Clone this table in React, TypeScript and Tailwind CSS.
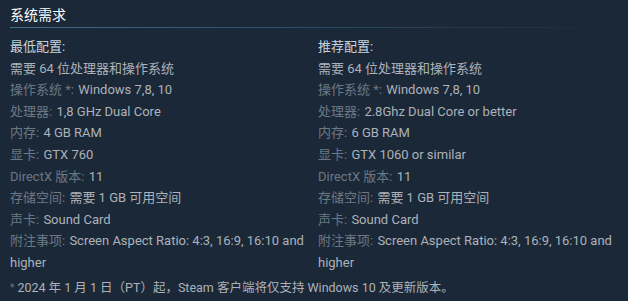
import React from "react";

type Row = { label: string; value: string };

const minRows: Row[] = [
  { label: "操作系统 *:", value: "Windows 7,8, 10" },
  { label: "处理器:", value: "1,8 GHz Dual Core" },
  { label: "内存:", value: "4 GB RAM" },
  { label: "显卡:", value: "GTX 760" },
  { label: "DirectX 版本:", value: "11" },
  { label: "存储空间:", value: "需要 1 GB 可用空间" },
  { label: "声卡:", value: "Sound Card" },
  { label: "附注事项:", value: "Screen Aspect Ratio: 4:3, 16:9, 16:10 and higher" },
];

const recRows: Row[] = [
  { label: "操作系统 *:", value: "Windows 7,8, 10" },
  { label: "处理器:", value: "2.8Ghz Dual Core or better" },
  { label: "内存:", value: "6 GB RAM" },
  { label: "显卡:", value: "GTX 1060 or similar" },
  { label: "DirectX 版本:", value: "11" },
  { label: "存储空间:", value: "需要 1 GB 可用空间" },
  { label: "声卡:", value: "Sound Card" },
  { label: "附注事项:", value: "Screen Aspect Ratio: 4:3, 16:9, 16:10 and higher" },
];

function Column({ title, rows }: { title: string; rows: Row[] }) {
  return (
    <div className="w-[300px]">
      <div className="text-[#c6d4df]">{title}</div>
      <ul>
        <li className="text-[#acb2b8]">需要 64 位处理器和操作系统</li>
        {rows.map((r, i) => (
          <li key={i} className="text-[#acb2b8]">
            <span className="text-[#6b7884] mr-[1px]">{r.label}</span> {r.value}
          </li>
        ))}
      </ul>
    </div>
  );
}

export default function App() {
  return (
    <div
      className="w-[628px] h-[301px] bg-[#1b2838] px-[10px] pt-[5px] text-[13px] leading-[21.6px]"
      style={{ fontFamily: 'Roboto, "Noto Sans CJK SC", sans-serif' }}
    >
      <h2 className="text-[14px] leading-[20px] text-white">系统需求</h2>
      <div className="mt-[2px] h-px bg-gradient-to-r from-[#3d6f8e] to-transparent" />
      <div className="mt-[8px] flex justify-between">
        <Column title="最低配置:" rows={minRows} />
        <Column title="推荐配置:" rows={recRows} />
      </div>
      <div className="mt-[3px] text-[12.5px] text-[#acb2b8]">
        <span className="text-[#6b7884] text-[10px] align-top">*</span> 2024 年 1 月 1 日（PT）起，Steam 客户端将仅支持 Windows 10 及更新版本。
      </div>
    </div>
  );
}
